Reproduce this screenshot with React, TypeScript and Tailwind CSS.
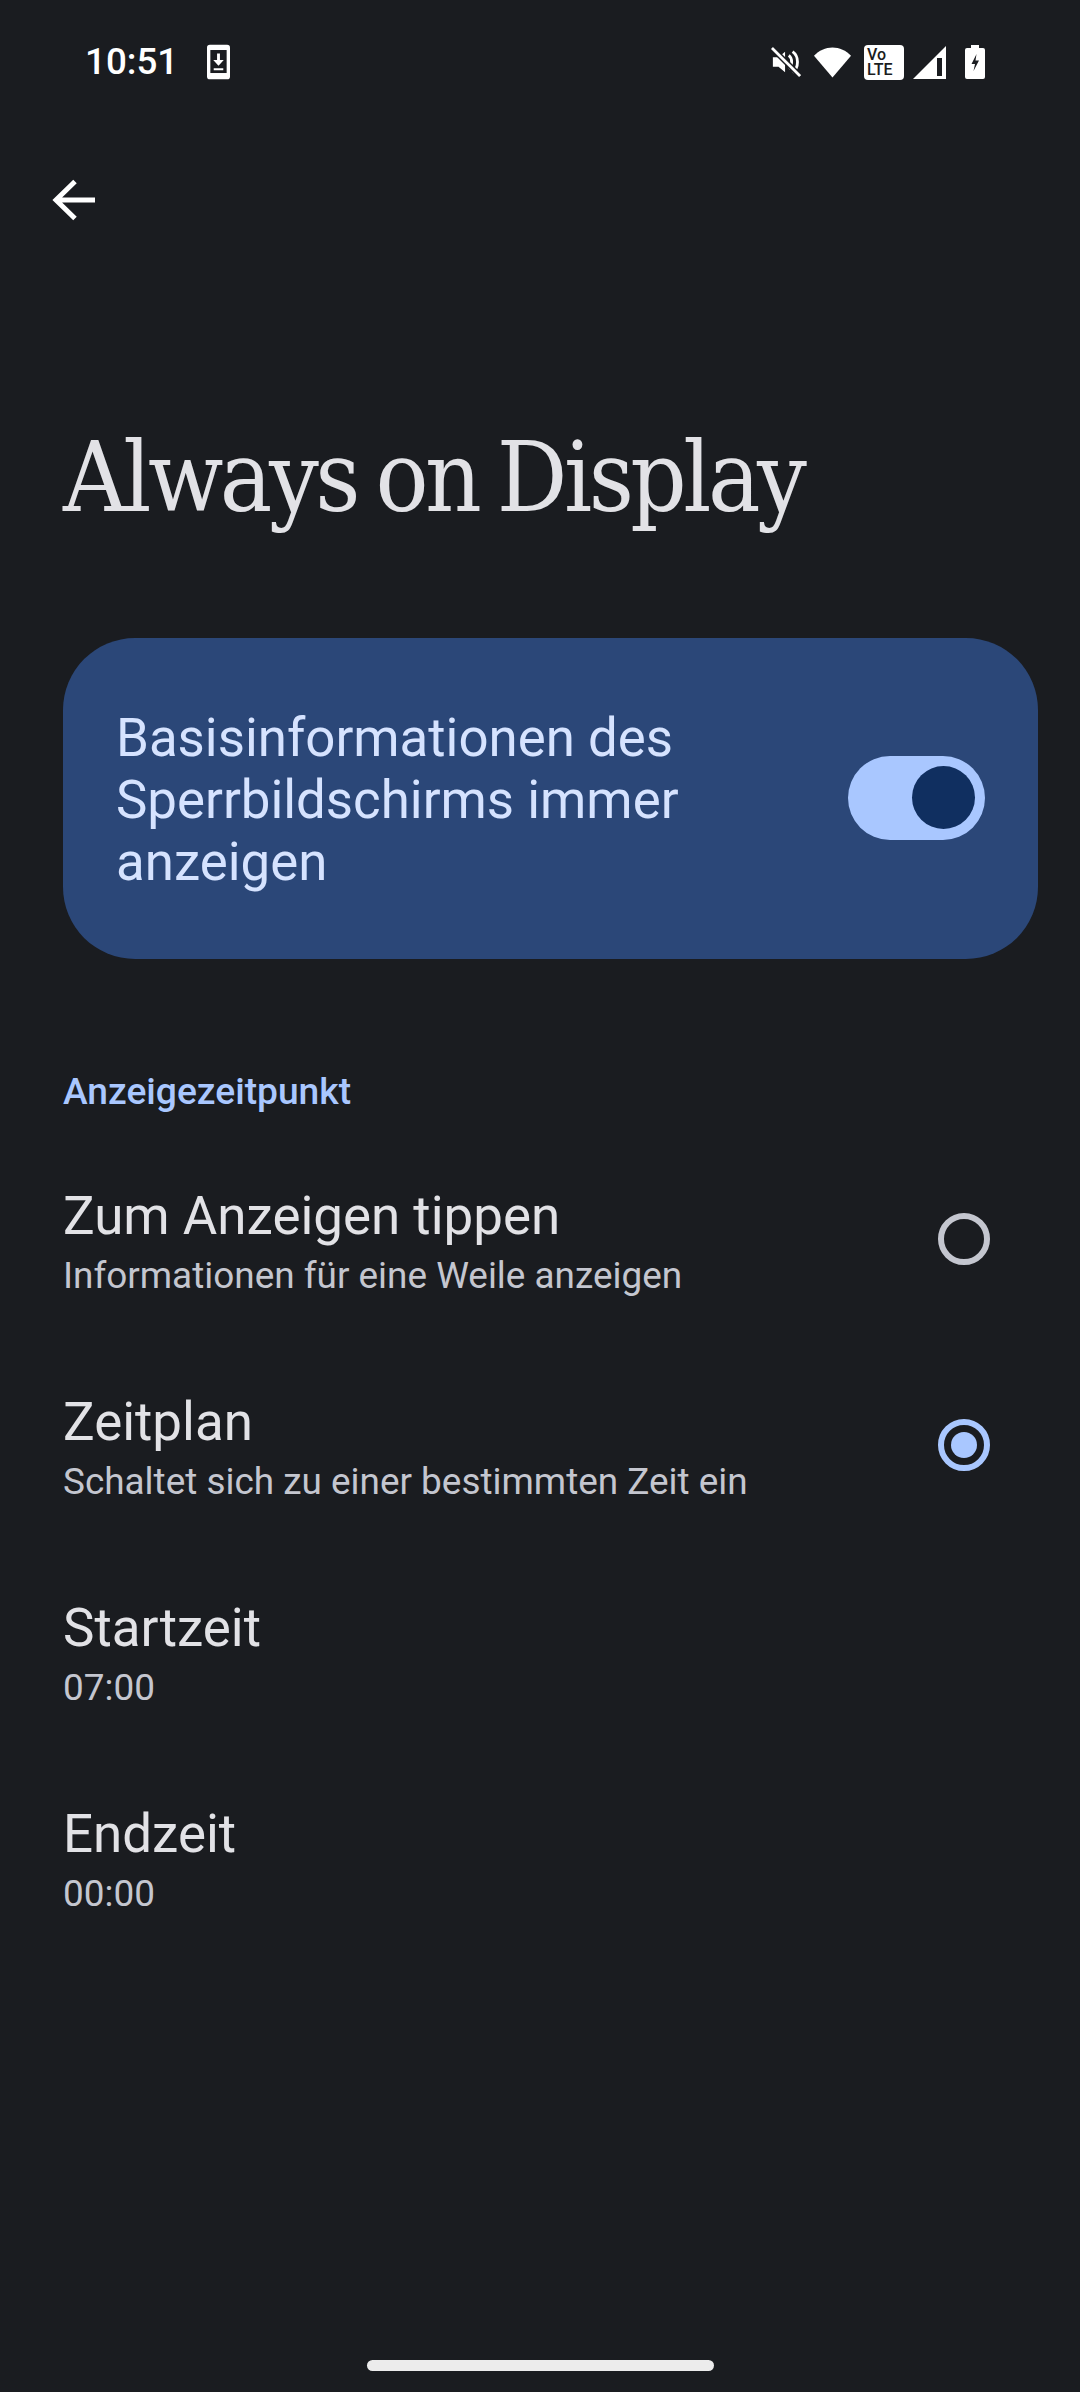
const Row = ({ title, sub, radio }: { title: string; sub: string; radio?: "on" | "off" }) => (
  <div className="h-[206px] flex items-center justify-between pl-[63px] pr-[90px]">
    <div className="flex flex-col pt-[6px]">
      <div className="text-[52.9px] leading-[66px] text-[#e2e2e6]">{title}</div>
      <div className="text-[36.9px] leading-[50px] text-[#c4c6cf] mt-[2px]">{sub}</div>
    </div>
    {radio === "off" && <div className="w-[52px] h-[52px] rounded-full border-[6px] border-[#c4c6cf]" />}
    {radio === "on" && (
      <div className="w-[52px] h-[52px] rounded-full border-[6px] border-[#a9c7ff] flex items-center justify-center">
        <div className="w-[26px] h-[26px] rounded-full bg-[#a9c7ff]" />
      </div>
    )}
  </div>
);

export default function App() {
  return (
    <div className="w-[1080px] h-[2392px] bg-[#1a1c20] flex flex-col overflow-hidden" style={{ fontFamily: "Roboto, sans-serif" }}>
      <div className="h-[124px] flex items-center justify-between pl-[85px] pr-[95px] text-white">
        <div className="flex items-center gap-[29px]">
          <span className="text-[36.75px] leading-none font-medium">10:51</span>
          <svg width="23" height="36" viewBox="0 0 24 36" fill="none">
            <rect x="0" y="0" width="24" height="36" rx="3" fill="#fff" />
            <rect x="3.5" y="5.5" width="17" height="24" fill="#1a1c20" />
            <path d="M10.5 9h3v7h4l-5.500 6-5.500-6h4z M7 24.500h10v2H7z" fill="#fff" />
          </svg>
        </div>
        <div className="flex items-center">
          <svg width="30" height="32" viewBox="0 0 32 32" fill="none" className="mr-[12px]">
            <path d="M2 11h6l7-6v22l-7-6H2z" fill="#fff" />
            <path d="M19 9c4 3 4 11 0 14M23 5c7 5 7 17 0 22" stroke="#fff" strokeWidth="3" />
            <path d="M1 1l30 30" stroke="#1a1c20" strokeWidth="6" />
            <path d="M1 1l30 30" stroke="#fff" strokeWidth="3" />
          </svg>
          <svg width="39" height="32" viewBox="0 0 40 32" className="mr-[12px]">
            <path d="M1 9.500C6 4 13 1 20 1s14 3 19 8.500L20 32z" fill="#fff" />
          </svg>
          <div className="w-[40px] h-[35px] rounded-[4px] bg-white text-[#1a1c20] font-medium text-[16px] leading-[15px] pl-[3px] pt-[2px] mr-[9px]">
            <div>Vo</div>
            <div>LTE</div>
          </div>
          <svg width="33" height="33" viewBox="0 0 33 33" className="mr-[19px]">
            <path d="M33 0v33H0z" fill="#fff" />
            <rect x="24" y="12" width="5" height="18" fill="#1a1c20" />
          </svg>
          <svg width="20" height="34" viewBox="0 0 20 34">
            <path d="M6 0h8v3h4a2 2 0 0 1 2 2v27a2 2 0 0 1-2 2H2a2 2 0 0 1-2-2V5a2 2 0 0 1 2-2h4z" fill="#fff" />
            <path d="M11.500 9l-5 10h3.500l-1.500 7 5.500-10.500h-3.500z" fill="#1a1c20" />
          </svg>
        </div>
      </div>

      <div className="h-[152px] pl-[52px] flex items-center">
        <svg width="44" height="44" viewBox="0 0 44 44" fill="none">
          <path d="M43 22H4M23 3.500L4 22l19 18.500" stroke="#fff" strokeWidth="5" />
        </svg>
      </div>

      <h1 className="mt-[141px] pl-[63px] text-[98px] leading-[120px] tracking-[-3.5px] [word-spacing:-6px] text-[#e2e2e6] whitespace-nowrap font-normal" style={{ fontFamily: '"DejaVu Serif Condensed", "DejaVu Serif", serif' }}>
        Always on Display
      </h1>

      <div className="mt-[101px] ml-[63px] w-[975px] h-[321px] rounded-[72px] bg-[#2b4778] flex items-center justify-between pl-[53px] pr-[53px]">
        <div className="text-[52.8px] leading-[62px] text-[#d6e3ff] w-[640px] pt-[2px]">
          Basisinformationen des Sperrbildschirms immer anzeigen
        </div>
        <div className="w-[137px] h-[84px] mb-[2px] rounded-full bg-[#a9c7ff] flex items-center justify-end pr-[10px]">
          <div className="w-[63px] h-[63px] rounded-full bg-[#102f60]" />
        </div>
      </div>

      <div className="mt-[108px] pl-[63px] text-[37.2px] leading-[48px] font-medium text-[#a9c7ff]">Anzeigezeitpunkt</div>

      <div className="mt-[21px] flex flex-col">
        <Row title="Zum Anzeigen tippen" sub="Informationen für eine Weile anzeigen" radio="off" />
        <Row title="Zeitplan" sub="Schaltet sich zu einer bestimmten Zeit ein" radio="on" />
        <Row title="Startzeit" sub="07:00" />
        <Row title="Endzeit" sub="00:00" />
      </div>

      <div className="mt-auto mb-[21px] mx-auto w-[347px] h-[11px] rounded-full bg-[#ececec]" />
    </div>
  );
}
